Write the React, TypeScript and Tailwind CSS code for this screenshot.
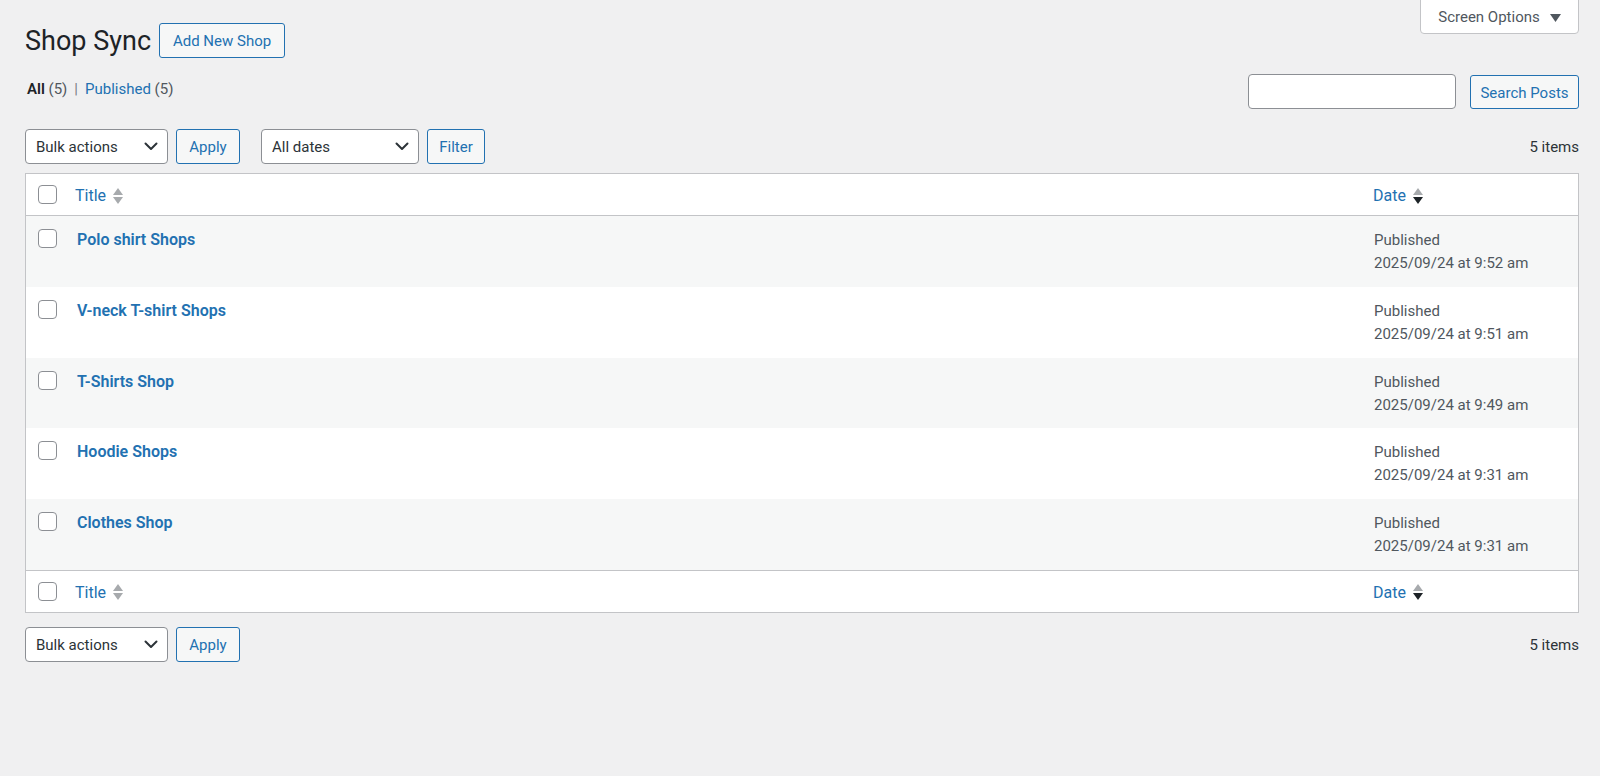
import React from "react";

const SortIcon = ({ active }: { active?: boolean }) => (
  <svg width="10" height="17" viewBox="0 0 10 17" className="shrink-0">
    <polygon points="5,0 10,7 0,7" fill="#a7aaad" />
    <polygon points="0,9 10,9 5,16" fill={active ? "#1d2327" : "#a7aaad"} />
  </svg>
);

const Chevron = () => (
  <svg width="14" height="9" viewBox="0 0 14 9" className="shrink-0">
    <path d="M1.5 1.5 L7 7 L12.5 1.5" fill="none" stroke="#2c3338" strokeWidth="2" strokeLinecap="round" strokeLinejoin="round" />
  </svg>
);

const FakeSelect = ({ label, w }: { label: string; w: string }) => (
  <div className={`${w} h-[35px] flex items-center justify-between pl-[10px] pr-[9px] bg-white border border-[#8c8f94] rounded-[4px] text-[15px] text-[#2c3338]`}>
    <span className="pt-[2px]">{label}</span>
    <Chevron />
  </div>
);

const Btn = ({ label, w }: { label: string; w: string }) => (
  <div className={`${w} h-[35px] flex items-center justify-center pt-[2px] bg-[#f6f7f7] border border-[#2271b1] rounded-[3px] text-[15px] text-[#2271b1]`}>
    {label}
  </div>
);

const Checkbox = () => (
  <div className="w-[19px] h-[19px] bg-white border border-[#8c8f94] rounded-[4px]" />
);

const rows = [
  { title: "Polo shirt Shops", date: "2025/09/24 at 9:52 am" },
  { title: "V-neck T-shirt Shops", date: "2025/09/24 at 9:51 am" },
  { title: "T-Shirts Shop", date: "2025/09/24 at 9:49 am" },
  { title: "Hoodie Shops", date: "2025/09/24 at 9:31 am" },
  { title: "Clothes Shop", date: "2025/09/24 at 9:31 am" },
];

const HeadRow = ({ border }: { border: "top" | "bottom" }) => (
  <div
    className={`grid grid-cols-[49px_1fr_215px] items-center bg-white ${
      border === "bottom" ? "border-b border-[#c3c4c7] h-[42px]" : "border-t border-[#c3c4c7] h-[42px]"
    }`}
  >
    <div className="pl-[12px] flex items-center">
      <Checkbox />
    </div>
    <div className="pt-[3px] flex items-center gap-[7px] text-[16px] text-[#2271b1]">
      <span>Title</span>
      <SortIcon />
    </div>
    <div className="pt-[3px] pl-[10px] flex items-center gap-[7px] text-[16px] text-[#2271b1]">
      <span>Date</span>
      <SortIcon active />
    </div>
  </div>
);

export default function App() {
  return (
    <div className="min-h-screen bg-[#f0f0f1] pl-[25px] pr-[21px] font-['Segoe_UI',Roboto,'Noto_Sans',sans-serif] text-[#2c3338]">
      {/* Header */}
      <div className="flex justify-between items-start">
        <div className="pt-[23px] flex items-center gap-[8px]">
          <h1 className="text-[27px] leading-[33px] pt-[2px] text-[#1d2327] font-normal">Shop Sync</h1>
          <Btn label="Add New Shop" w="w-[126px]" />
        </div>
        <div className="w-[159px] h-[35px] -mt-px flex items-center justify-center gap-[10px] pt-[2px] bg-white border border-[#c3c4c7] rounded-b-[4px] text-[15px] text-[#50575e]">
          <span>Screen Options</span>
          <svg width="11" height="8" viewBox="0 0 11 8">
            <polygon points="0,0 11,0 5.5,8" fill="#50575e" />
          </svg>
        </div>
      </div>

      {/* Subsubsub + search */}
      <div className="mt-[16px] flex justify-between items-start">
        <div className="pt-[5px] pl-[2px] text-[15px] leading-[20px] text-[#50575e]">
          <span className="font-semibold text-[#1d2327]">All</span> (5)
          <span className="mx-[7px] text-[#787c82]">|</span>
          <span className="text-[#2271b1]">Published</span> (5)
        </div>
        <div className="flex items-start gap-[14px]">
          <div className="w-[208px] h-[35px] bg-white border border-[#8c8f94] rounded-[4px]" />
          <div className="mt-px">
            <Btn label="Search Posts" w="w-[109px] !h-[34px]" />
          </div>
        </div>
      </div>

      {/* Top tablenav */}
      <div className="mt-[20px] flex justify-between items-center">
        <div className="flex items-center">
          <FakeSelect label="Bulk actions" w="w-[143px]" />
          <div className="ml-[8px]">
            <Btn label="Apply" w="w-[64px]" />
          </div>
          <div className="ml-[21px]">
            <FakeSelect label="All dates" w="w-[158px]" />
          </div>
          <div className="ml-[8px]">
            <Btn label="Filter" w="w-[58px]" />
          </div>
        </div>
        <div className="pt-[2px] text-[15px] text-[#2c3338]">5 items</div>
      </div>

      {/* Table */}
      <div className="mt-[9px] border border-[#c3c4c7] bg-white">
        <HeadRow border="bottom" />
        {rows.map((r, i) => (
          <div
            key={r.title}
            className={`grid grid-cols-[49px_1fr_215px] h-[70.8px] items-start ${
              i % 2 === 0 ? "bg-[#f6f7f7]" : "bg-white"
            }`}
          >
            <div className="pl-[12px] pt-[13px]">
              <Checkbox />
            </div>
            <div className="pl-[2px] pt-[13px] text-[16px] leading-[22px] font-semibold text-[#2271b1]">
              {r.title}
            </div>
            <div className="pl-[11px] pt-[13px] text-[15px] leading-[23px] text-[#50575e]">
              <div>Published</div>
              <div>{r.date}</div>
            </div>
          </div>
        ))}
        <HeadRow border="top" />
      </div>

      {/* Bottom tablenav */}
      <div className="mt-[14px] flex justify-between items-center">
        <div className="flex items-center">
          <FakeSelect label="Bulk actions" w="w-[143px]" />
          <div className="ml-[8px]">
            <Btn label="Apply" w="w-[64px]" />
          </div>
        </div>
        <div className="pt-[2px] text-[15px] text-[#2c3338]">5 items</div>
      </div>
    </div>
  );
}
